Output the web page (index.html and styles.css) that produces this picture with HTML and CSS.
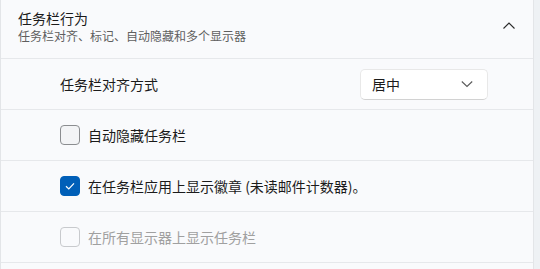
FILE: index.html
```html
<!DOCTYPE html>
<html lang="zh-CN">
<head>
<meta charset="utf-8">
<link rel="stylesheet" href="styles.css">
</head>
<body>
<div class="page">
  <section class="card">
    <header class="card-head">
      <div class="head-text">
        <div class="title">任务栏行为</div>
        <div class="subtitle">任务栏对齐、标记、自动隐藏和多个显示器</div>
      </div>
      <svg class="chev-up" width="16" height="16" viewBox="0 0 16 16"><path d="M2.5 10.5 L8 5 L13.5 10.5" fill="none" stroke="#2a2a2a" stroke-width="1.1"/></svg>
    </header>
    <div class="row row-select">
      <span class="label">任务栏对齐方式</span>
      <div class="select">
        <span>居中</span>
        <svg width="12" height="12" viewBox="0 0 12 12"><path d="M0.8 3.5 L6 8.5 L11.2 3.5" fill="none" stroke="#5a5a5a" stroke-width="1.1"/></svg>
      </div>
    </div>
    <div class="row">
      <span class="box"></span>
      <span class="label">自动隐藏任务栏</span>
    </div>
    <div class="row">
      <span class="box checked"><svg width="12" height="12" viewBox="0 0 12 12"><path d="M2 6.3 L4.8 9 L10 3.4" fill="none" stroke="#ffffff" stroke-width="1.2"/></svg></span>
      <span class="label">在任务栏应用上显示徽章 (未读邮件计数器)。</span>
    </div>
    <div class="row disabled">
      <span class="box"></span>
      <span class="label">在所有显示器上显示任务栏</span>
    </div>
  </section>
  <div class="gutter"></div>
</div>
</body>
</html>
```

FILE: styles.css
```css
html, body {
  margin: 0;
  padding: 0;
  background: #eef1f4;
}
body {
  font-family: "Noto Sans CJK SC", "Noto Sans", sans-serif;
  color: #1b1b1b;
  overflow: hidden;
}
.page {
  display: flex;
  height: 269px;
}
.card {
  width: 532px;
  flex: none;
  background: #f9fafc;
  border-left: 1px solid #e3e5e8;
  border-right: 1px solid #e3e5e8;
}
.gutter {
  flex: 1;
  background: #eef1f4;
}
.card-head {
  display: flex;
  justify-content: space-between;
  align-items: flex-start;
  height: 59px;
  box-sizing: border-box;
  padding: 8px 16px 0 17px;
  border-bottom: 1px solid #e6e8eb;
}
.title {
  font-size: 14px;
  line-height: 20px;
  color: #1b1b1b;
}
.subtitle {
  font-size: 12px;
  line-height: 15px;
  color: #5f5f5f;
}
.chev-up {
  margin-top: 10px;
}
.row {
  display: flex;
  align-items: center;
  height: 50px;
  padding: 0 45px 0 59px;
  border-bottom: 1px solid #e6e8eb;
}
.row-select {
  justify-content: space-between;
}
.label {
  font-size: 14px;
  line-height: 20px;
}
.select {
  width: 128px;
  height: 31px;
  box-sizing: border-box;
  display: flex;
  align-items: center;
  justify-content: space-between;
  padding: 0 14px 0 11px;
  background: #ffffff;
  border: 1px solid #e8e8e8;
  border-bottom-color: #d2d2d2;
  border-radius: 5px;
  font-size: 14px;
  line-height: 20px;
}
.select svg {
  display: block;
}
.box {
  width: 20px;
  height: 20px;
  box-sizing: border-box;
  border: 1px solid #8b8d90;
  border-radius: 4px;
  background: #f3f4f6;
  margin-right: 8px;
  display: flex;
  align-items: center;
  justify-content: center;
  flex: none;
}
.box.checked {
  background: #005fb8;
  border-color: #005fb8;
}
.disabled .box {
  border-color: #c8cacd;
  background: transparent;
}
.disabled .label {
  color: #a0a0a0;
}
```
